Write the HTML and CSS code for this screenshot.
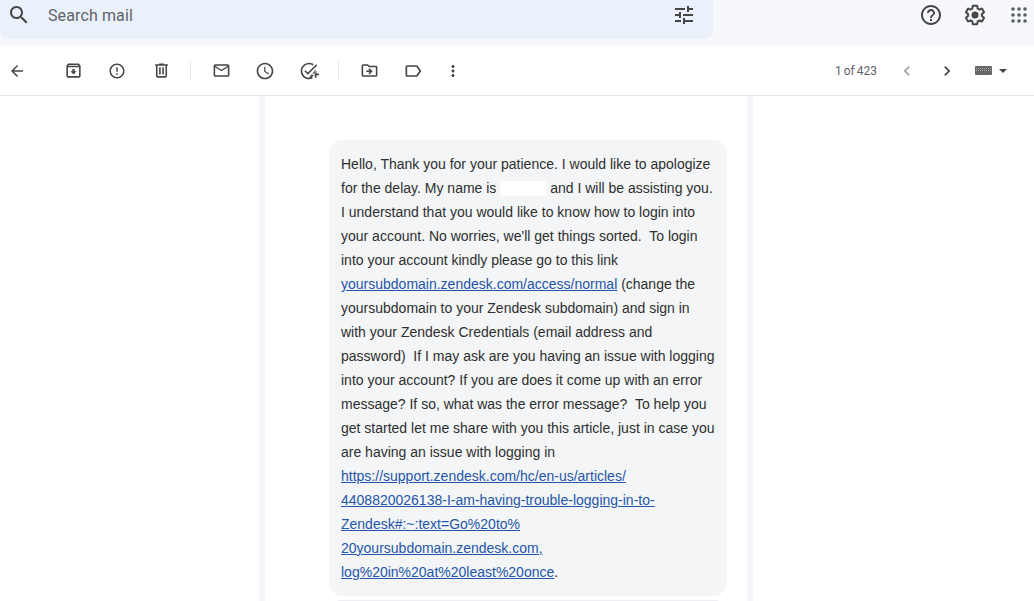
FILE: index.html
```html
<!DOCTYPE html>
<html lang="en">
<head>
<meta charset="utf-8">
<title>Mail</title>
<link rel="stylesheet" href="styles.css">
</head>
<body>
<header class="topbar">
  <div class="search">
    <svg class="ic24 search-ic" viewBox="0 0 24 24"><path d="M15.5 14h-.79l-.28-.27C15.41 12.59 16 11.11 16 9.5 16 5.91 13.09 3 9.5 3S3 5.91 3 9.5 5.91 16 9.5 16c1.61 0 3.09-.59 4.23-1.57l.27.28v.79l5 4.99L20.49 19l-4.99-5zm-6 0C7.01 14 5 11.99 5 9.5S7.01 5 9.5 5 14 7.01 14 9.5 11.99 14 9.5 14z"/></svg>
    <span class="search-text">Search mail</span>
    <svg class="ic24 tune" viewBox="0 0 24 24"><path d="M3 17v2h6v-2H3zM3 5v2h10V5H3zm10 16v-2h8v-2h-8v-2h-2v6h2zM7 9v2H3v2h4v2h2V9H7zm14 4v-2H11v2h10zm-6-4h2V7h4V5h-4V3h-2v6z"/></svg>
  </div>
  <div class="top-actions">
    <svg class="ic24" viewBox="0 0 24 24"><path d="M11 18h2v-2h-2v2zm1-16C6.48 2 2 6.48 2 12s4.48 10 10 10 10-4.48 10-10S17.52 2 12 2zm0 18c-4.41 0-8-3.59-8-8s3.59-8 8-8 8 3.59 8 8-3.59 8-8 8zm0-14c-2.21 0-4 1.79-4 4h2c0-1.1.9-2 2-2s2 .9 2 2c0 2-3 1.75-3 5h2c0-2.25 3-2.5 3-5 0-2.21-1.79-4-4-4z"/></svg>
    <svg class="ic24" viewBox="0 0 24 24"><path d="M13.85 22.25h-3.7c-.74 0-1.36-.54-1.45-1.27l-.27-1.89c-.27-.14-.53-.29-.79-.46l-1.8.72c-.7.26-1.47-.03-1.81-.65L2.2 15.53c-.35-.66-.2-1.44.36-1.88l1.53-1.19c-.01-.15-.02-.3-.02-.46 0-.15.01-.31.02-.46l-1.52-1.19c-.59-.45-.74-1.26-.37-1.88l1.85-3.19c.34-.62 1.11-.9 1.79-.63l1.81.73c.26-.17.52-.32.78-.46l.27-1.91c.09-.7.71-1.25 1.44-1.25h3.7c.74 0 1.36.54 1.45 1.27l.27 1.89c.27.14.53.29.79.46l1.8-.72c.71-.26 1.48.03 1.82.65l1.84 3.18c.36.66.2 1.44-.36 1.88l-1.52 1.19c.01.15.02.3.02.46s-.01.31-.02.46l1.52 1.19c.56.45.72 1.23.37 1.86l-1.86 3.22c-.34.62-1.11.9-1.8.63l-1.8-.72c-.26.17-.52.32-.78.46l-.27 1.91c-.1.68-.72 1.22-1.46 1.22zm-3.23-2h2.76l.37-2.55.53-.22c.44-.18.88-.44 1.34-.78l.45-.34 2.38.96 1.38-2.4-2.03-1.58.07-.56c.03-.26.06-.51.06-.78s-.03-.53-.06-.78l-.07-.56 2.03-1.58-1.39-2.4-2.39.96-.45-.35c-.42-.32-.87-.58-1.33-.77l-.52-.22-.37-2.55h-2.76l-.37 2.55-.53.21c-.44.19-.88.44-1.34.79l-.45.33-2.38-.95-1.39 2.39 2.03 1.58-.07.56a7 7 0 0 0-.06.79c0 .26.02.53.06.78l.07.56-2.03 1.58 1.38 2.4 2.39-.96.45.35c.43.33.86.58 1.33.77l.53.22.38 2.55z"/><circle cx="12" cy="12" r="3.5"/></svg>
    <svg class="ic24 apps" viewBox="0 0 24 24"><circle cx="6" cy="6" r="1.8"/><circle cx="12" cy="6" r="1.8"/><circle cx="18" cy="6" r="1.8"/><circle cx="6" cy="12" r="1.8"/><circle cx="12" cy="12" r="1.8"/><circle cx="18" cy="12" r="1.8"/><circle cx="6" cy="18" r="1.8"/><circle cx="12" cy="18" r="1.8"/><circle cx="18" cy="18" r="1.8"/></svg>
  </div>
</header>

<nav class="toolbar">
  <span class="btn btn-back"><svg class="ic18" viewBox="0 0 24 24"><path d="M20 11H7.83l5.59-5.59L12 4l-8 8 8 8 1.41-1.41L7.83 13H20v-2z"/></svg></span>
  <span class="btn"><svg class="ic19" viewBox="0 0 24 24"><path d="M20.54 5.23l-1.39-1.68C18.88 3.21 18.47 3 18 3H6c-.47 0-.88.21-1.15.55L3.46 5.23C3.17 5.57 3 6.02 3 6.5V19c0 1.1.9 2 2 2h14c1.1 0 2-.9 2-2V6.5c0-.48-.17-.93-.46-1.27zM6.24 5h11.52l.81.97H5.44l.8-.97zM5 19V8h14v11H5zm8.45-9h-2.9v3H8l4 4 4-4h-2.55z"/></svg></span>
  <span class="btn"><svg class="ic18" viewBox="0 0 24 24"><path d="M11 15h2v2h-2zm0-8h2v6h-2zm.99-5C6.47 2 2 6.48 2 12s4.47 10 9.99 10C17.52 22 22 17.52 22 12S17.52 2 11.99 2zM12 20c-4.42 0-8-3.58-8-8s3.58-8 8-8 8 3.58 8 8-3.58 8-8 8z"/></svg></span>
  <span class="btn"><svg class="ic19" viewBox="0 0 24 24"><path d="M15 4V3H9v1H4v2h1v13c0 1.1.9 2 2 2h10c1.1 0 2-.9 2-2V6h1V4h-5zm2 15H7V6h10v13zM9 8h2v9H9zm4 0h2v9h-2z"/></svg></span>
  <span class="divider"></span>
  <span class="btn"><svg class="ic19" viewBox="0 0 24 24"><path d="M20 4H4c-1.1 0-2 .9-2 2v12c0 1.1.9 2 2 2h16c1.1 0 2-.9 2-2V6c0-1.1-.9-2-2-2zm0 14H4V8l8 5 8-5v10zm-8-7L4 6h16l-8 5z"/></svg></span>
  <span class="btn"><svg class="ic20" viewBox="0 0 24 24"><path d="M11.99 2C6.47 2 2 6.48 2 12s4.47 10 9.99 10C17.52 22 22 17.52 22 12S17.52 2 11.99 2zM12 20c-4.42 0-8-3.58-8-8s3.58-8 8-8 8 3.58 8 8-3.58 8-8 8zm.5-13H11v6l5.25 3.15.75-1.23-4.5-2.67z"/></svg></span>
  <span class="btn"><svg class="ic20" viewBox="0 0 24 24"><path d="M22 5.18L10.59 16.6l-4.24-4.24 1.41-1.41 2.83 2.83 10-10L22 5.18zm-2.21 5.04c.13.57.21 1.17.21 1.78 0 4.42-3.58 8-8 8s-8-3.58-8-8 3.58-8 8-8c1.58 0 3.04.46 4.28 1.25l1.44-1.44C16.1 2.67 14.13 2 12 2 6.48 2 2 6.48 2 12s4.48 10 10 10c1.73 0 3.36-.44 4.78-1.22l-1.5-1.5c-.98.46-2.11.72-3.28.72zM19 15h-3v2h3v3h2v-3h3v-2h-3v-3h-2v3z"/></svg></span>
  <span class="divider"></span>
  <span class="btn"><svg class="ic19" viewBox="0 0 24 24"><path d="M20 6h-8l-2-2H4c-1.1 0-2 .9-2 2v12c0 1.1.9 2 2 2h16c1.1 0 2-.9 2-2V8c0-1.1-.9-2-2-2zm0 12H4V6h5.17l2 2H20v10zm-8.01-9l-1.41 1.41L12.16 12H8v2h4.16l-1.59 1.59L11.99 17 16 13.01 11.99 9z"/></svg></span>
  <span class="btn"><svg class="ic20" viewBox="0 0 24 24"><path d="M17.63 5.84C17.27 5.33 16.67 5 16 5L5 5.01C3.9 5.01 3 5.9 3 7v10c0 1.1.9 1.99 2 1.99L16 19c.67 0 1.27-.33 1.63-.84L22 12l-4.37-6.16zM16 17H5V7h11l3.55 5L16 17z"/></svg></span>
  <span class="btn btn-more"><svg class="ic18" viewBox="0 0 24 24"><path d="M12 8c1.1 0 2-.9 2-2s-.9-2-2-2-2 .9-2 2 .9 2 2 2zm0 2c-1.1 0-2 .9-2 2s.9 2 2 2 2-.9 2-2-.9-2-2-2zm0 6c-1.1 0-2 .9-2 2s.9 2 2 2 2-.9 2-2-.9-2-2-2z"/></svg></span>
  <div class="pager">
    <span class="count">1 of 423</span>
    <span class="page-btn muted"><svg class="ic20" viewBox="0 0 24 24"><path d="M15.41 7.41L14 6l-6 6 6 6 1.41-1.41L10.83 12z"/></svg></span>
    <span class="page-btn"><svg class="ic20" viewBox="0 0 24 24"><path d="M10 6L8.59 7.41 13.17 12l-4.58 4.59L10 18l6-6z"/></svg></span>
    <span class="kbd"></span>
    <span class="caret"></span>
  </div>
</nav>

<main class="stage">
  <div class="column">
    <article class="sheet">
      <div class="bubble">
        Hello, Thank you for your patience. I would like to apologize<br>
        for the delay. My name is <span class="redact"></span> and I will be assisting you.<br>
        I understand that you would like to know how to login into<br>
        your account. No worries, we'll get things sorted.&nbsp; To login<br>
        into your account kindly please go to this link<br>
        <a href="#">yoursubdomain.zendesk.com/access/normal</a> (change the<br>
        yoursubdomain to your Zendesk subdomain) and sign in<br>
        with your Zendesk Credentials (email address and<br>
        password)&nbsp; If I may ask are you having an issue with logging<br>
        into your account? If you are does it come up with an error<br>
        message? If so, what was the error message?&nbsp; To help you<br>
        get started let me share with you this article, just in case you<br>
        are having an issue with logging in<br>
        <a href="#">https://support.zendesk.com/hc/en-us/articles/<br>
        4408820026138-I-am-having-trouble-logging-in-to-<br>
        Zendesk#:~:text=Go%20to%<br>
        20yoursubdomain.zendesk.com,<br>
        log%20in%20at%20least%20once</a>.
      </div>
      <hr class="rule">
    </article>
  </div>
</main>
</body>
</html>
```

FILE: styles.css
```css
* { box-sizing: border-box; }

html, body {
  margin: 0;
  height: 100%;
  overflow: hidden;
}

body {
  background: #f6f8fc;
  font-family: "Liberation Sans", Arial, sans-serif;
  display: flex;
  flex-direction: column;
}

svg { display: block; fill: #444746; flex: none; }
.ic24 { width: 24px; height: 24px; }
.ic20 { width: 20px; height: 20px; }
.ic19 { width: 19px; height: 19px; }
.ic18 { width: 18px; height: 18px; }

.topbar {
  height: 46px;
  flex: none;
  display: flex;
  align-items: flex-start;
}

.search {
  width: 713px;
  height: 39px;
  background: #eaf1fb;
  border-radius: 0 0 8px 8px;
  display: flex;
  align-items: center;
  padding: 0 17px 9px 7px;
}

.search-text {
  margin: 2px 0 0 17px;
  font: 16px/20px Roboto, sans-serif;
  letter-spacing: .12px;
  color: #5f6368;
}

.tune { margin-left: auto; }

.top-actions {
  margin-left: auto;
  padding: 3px 3px 3px 0;
  display: flex;
  gap: 20px;
}

.apps { fill: #5a5d60; }

.toolbar {
  height: 50px;
  flex: none;
  background: #fff;
  border-bottom: 1px solid #e6e8ec;
  display: flex;
  align-items: center;
}

.btn {
  width: 44px;
  height: 40px;
  display: flex;
  align-items: center;
  justify-content: center;
}

.btn-back { width: 34px; margin-right: 17px; }
.btn-more { width: 36px; }

.divider {
  width: 1px;
  height: 20px;
  background: #e8eaed;
  margin: 0 8px 0 7px;
}

.pager {
  margin-left: auto;
  display: flex;
  align-items: center;
  padding-right: 27px;
}

.count {
  font: 12px/16px Roboto, sans-serif;
  word-spacing: -1px;
  color: #5f6368;
  margin-right: 10px;
}

.page-btn {
  width: 40px;
  display: flex;
  justify-content: center;
}
.page-btn.muted svg { fill: #9aa0a6; }

.kbd {
  width: 17px;
  height: 9px;
  margin-left: 8px;
  background:
    repeating-linear-gradient(90deg, #a8a8a8 0 1px, transparent 1px 2px) 1px 2px / 15px 1px no-repeat,
    repeating-linear-gradient(90deg, #a8a8a8 0 1px, transparent 1px 2px) 1px 4px / 15px 1px no-repeat,
    #666;
  border-radius: 1px;
}

.caret {
  margin-left: 7px;
  border-left: 4px solid transparent;
  border-right: 4px solid transparent;
  border-top: 4px solid #444;
}

.stage {
  flex: 1;
  min-height: 0;
  background: #fff;
  display: flex;
  justify-content: center;
  padding-right: 22px;
}

.column {
  width: 494px;
  background: #f4f6f9;
  padding: 0 6px;
}

.sheet {
  height: 100%;
  background: #fff;
  padding: 44px 20px 0 64px;
}

.bubble {
  width: 398px;
  padding: 12px;
  background: #f3f5f7;
  border-radius: 14px;
  font-size: 14px;
  line-height: 24px;
  color: #2f2f2f;
  white-space: nowrap;
}

.bubble a { color: #2456a8; }

.redact {
  display: inline-block;
  width: 46px;
  height: 15px;
  vertical-align: -3px;
  background: #fff;
  border-radius: 2px;
}

.rule {
  margin: 4px 9px 0;
  border: 0;
  border-top: 1px solid #eceef1;
}
```
